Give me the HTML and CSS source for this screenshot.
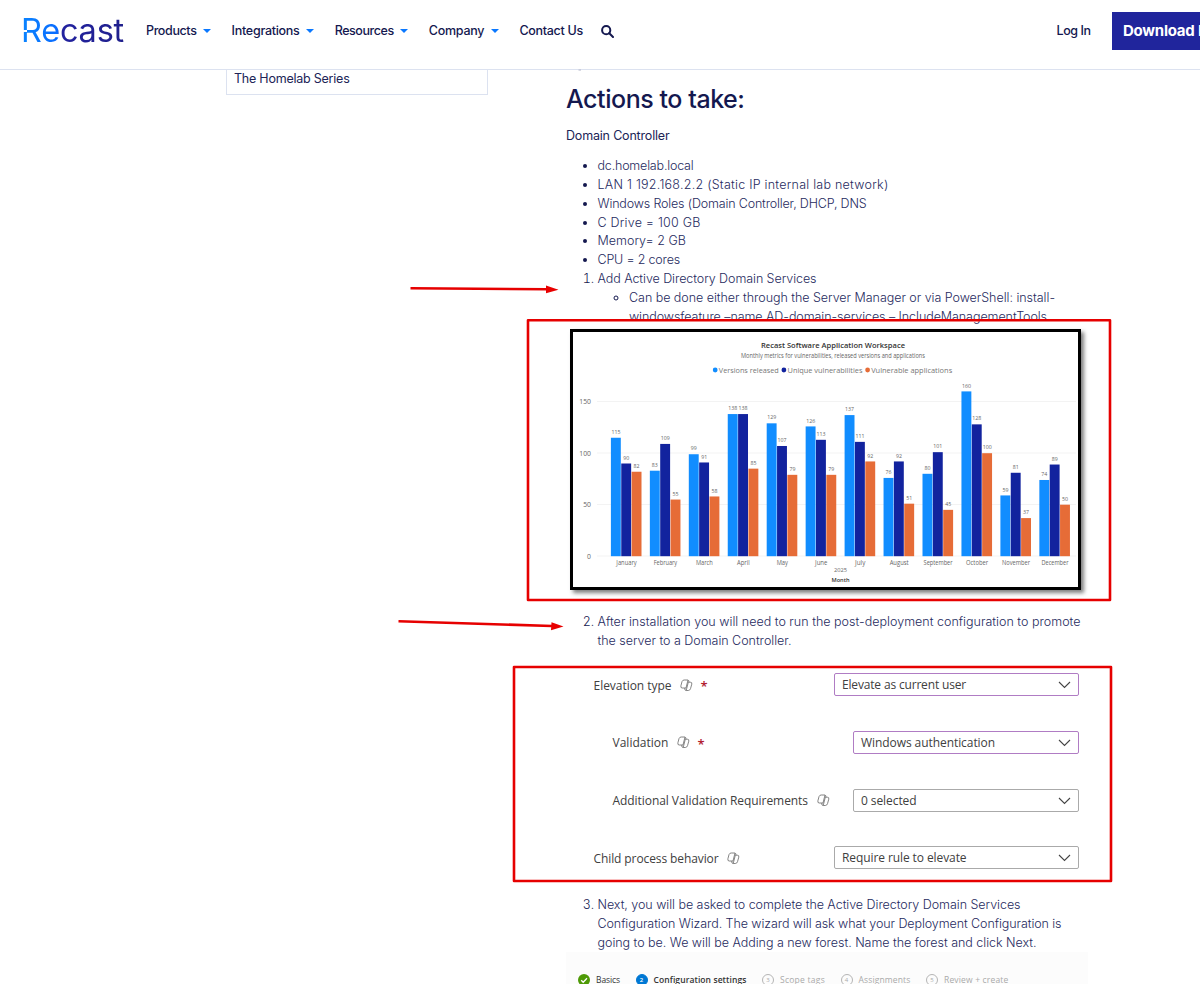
FILE: index.html
```html
<!DOCTYPE html>
<html lang="en">
<head>
<meta charset="utf-8">
<title>Recast - Homelab</title>
<link rel="stylesheet" href="styles.css">
</head>
<body>
<header class="header">
  <a class="logo"><span class="logo-text" data-w="103">Recast</span><i class="cut cut-r"></i></a>
  <nav class="nav">
    <a class="nav-item"><span data-w="50.5">Products</span><i class="caret"></i></a>
    <a class="nav-item"><span data-w="68">Integrations</span><i class="caret"></i></a>
    <a class="nav-item"><span data-w="59">Resources</span><i class="caret"></i></a>
    <a class="nav-item"><span data-w="55.5">Company</span><i class="caret"></i></a>
    <a class="nav-item"><span data-w="63.5">Contact Us</span></a>
    <svg class="search" viewBox="0 0 13 13"><circle cx="5.2" cy="5.2" r="4.1"/><path d="M8.3 8.3 12 12"/></svg>
  </nav>
  <a class="login"><span data-w="34">Log In</span></a>
  <a class="button"><span data-w="71.5">Download</span> R</a>
</header>
<div class="page">
  <aside class="toc"><span data-w="115.5">The Homelab Series</span></aside>
  <main class="content">
    <h2><span data-w="178.5">Actions to take:</span></h2>
    <p class="lead"><span data-w="103.5">Domain Controller</span></p>
    <ul class="specs">
      <li><span data-w="96">dc.homelab.local</span></li>
      <li><span data-w="291">LAN 1 192.168.2.2 (Static IP internal lab network)</span></li>
      <li><span data-w="269">Windows Roles (Domain Controller, DHCP, DNS</span></li>
      <li><span data-w="103">C Drive = 100 GB</span></li>
      <li><span data-w="88.5">Memory= 2 GB</span></li>
      <li><span data-w="82.5">CPU = 2 cores</span></li>
    </ul>
    <ol>
      <li><span data-w="219">Add Active Directory Domain Services</span>
        <ul class="sub">
          <li><span data-w="426">Can be done either through the Server Manager or via PowerShell: install-</span><br><span data-w="418">windowsfeature –name AD-domain-services – IncludeManagementTools</span></li>
        </ul>
      </li>
    </ol>
    <figure class="chart-frame"><svg id="chart" viewBox="573 332 505 255"></svg></figure>
    <ol start="2">
      <li><span data-w="483">After installation you will need to run the post-deployment configuration to promote</span><br><span data-w="194">the server to a Domain Controller.</span></li>
    </ol>
    <section class="form">
      <div class="row"><span class="label" data-w="78">Elevation type</span><svg class="pilot"><use href="#pilot"/></svg><b>*</b><div class="select wide hot"><span data-w="124">Elevate as current user</span><svg class="chev"><use href="#chev"/></svg></div></div>
      <div class="row nested"><span class="label" data-w="56">Validation</span><svg class="pilot"><use href="#pilot"/></svg><b>*</b><div class="select hot"><span data-w="134">Windows authentication</span><svg class="chev"><use href="#chev"/></svg></div></div>
      <div class="row nested"><span class="label" data-w="195.5">Additional Validation Requirements</span><svg class="pilot"><use href="#pilot"/></svg><div class="select"><span data-w="55.5">0 selected</span><svg class="chev"><use href="#chev"/></svg></div></div>
      <div class="row"><span class="label" data-w="125">Child process behavior</span><svg class="pilot"><use href="#pilot"/></svg><div class="select wide"><span data-w="124.5">Require rule to elevate</span><svg class="chev"><use href="#chev"/></svg></div></div>
    </section>
    <ol start="3">
      <li><span data-w="423">Next, you will be asked to complete the Active Directory Domain Services</span><br><span data-w="464">Configuration Wizard. The wizard will ask what your Deployment Configuration is</span><br><span data-w="439">going to be. We will be Adding a new forest. Name the forest and click Next.</span></li>
    </ol>
    <section class="steps">
      <div class="step done"><svg class="badge" viewBox="0 0 12 12"><path d="M3.2 6.2 5.2 8.2 9 4.2"/></svg><span data-w="24">Basics</span></div>
      <div class="step current"><i class="badge">2</i><span data-w="93">Configuration settings</span></div>
      <div class="step"><i class="badge">3</i><span data-w="45">Scope tags</span></div>
      <div class="step"><i class="badge">4</i><span data-w="52">Assignments</span></div>
      <div class="step"><i class="badge">5</i><span data-w="64.5">Review + create</span></div>
    </section>
  </main>
</div>
<svg class="marks" viewBox="0 0 1200 984">
  <defs>
    <g id="pilot" fill="none" stroke="#777" stroke-width=".9" stroke-linejoin="round"><path d="M4.200 1H8L6 9H2.200Q.4 9 .9 6.800L2 2.600Q2.600 1 4.200 1ZM8.200 3.200h2.100q1.900 0 1.500 1.900L10.500 9.700Q9.900 11.500 8.300 11.500H6.200L8.300 3.200M6.200 11.500Q4.400 11.500 4.700 9M8 1q1 .3 1 2.200"/></g>
    <path id="chev" d="M1 1 6.500 6.500 12 1" fill="none" stroke="#444" stroke-width="1.100"/>
  </defs>
  <rect x="528" y="320.300" width="582" height="279.700"/>
  <rect x="514" y="667" width="597" height="214"/>
  <path d="M410.500 288.300 547 289.300M398.500 621.300 552 626"/>
  <path class="head" d="M546 285.500 558.500 289.700 546 293.300ZM551.500 622.300 563.500 626.500 551 630.200Z"/>
  <path class="speck" d="M578.500 70h2.500"/>
</svg>
<script src="app.js"></script>
</body>
</html>
```
FILE: styles.css
```css
* { box-sizing: border-box; }
body { margin: 0; width: 1200px; height: 984px; overflow: hidden; position: relative; background: #fff; color: #262a5e; font: 300 12.5px/18.8px Inter, sans-serif; }
[data-w] { white-space: nowrap; }
.header { height: 70px; border-bottom: 1px solid #dce2f0; display: flex; align-items: flex-start; padding-left: 22px; color: #14184f; font-weight: 500; font-size: 12.5px; overflow: hidden; }
.logo { flex: none; position: relative; width: 124px; height: 62px; display: block; }
.logo-text { display: inline-block; margin-left: -1px; font: 400 32.5px/62px Inter, sans-serif; background: linear-gradient(90deg, #0a84ff 0, #0a6cff 37px, #2222a0 38px, #20208c 100%); -webkit-background-clip: text; background-clip: text; color: transparent; }
.cut { position: absolute; background: #fff; }
.cut-r { left: 0; top: 30px; width: 4.500px; height: 1.500px; }
.nav { flex: none; display: flex; align-items: center; height: 62px; gap: 20.600px; }
.nav-item { display: flex; align-items: center; }
.caret { margin-left: 6.500px; border: 4px solid transparent; border-top: 4.500px solid #0a78ff; border-bottom: 0; }
.search { width: 13px; height: 13px; margin-left: -2.500px; fill: none; stroke: #14184f; stroke-width: 2; stroke-linecap: round; }
.login { margin-left: auto; line-height: 62px; }
.button { flex: none; margin: 12px 0 0 21.500px; width: 88px; overflow: hidden; height: 37.500px; padding-left: 11px; background: #20259c; color: #fff; font-weight: 700; font-size: 15px; line-height: 37px; white-space: pre; }
.page { display: flex; align-items: flex-start; padding-left: 226px; }
.toc { width: 262px; height: 24.500px; border: 1px solid #dce2f0; border-top: 0; padding: 0 7px; line-height: 17px; font-weight: 400; color: #202456; }
.content { width: 522px; margin-left: 78px; }
h2 { margin: 15px 0 0; font-size: 25px; line-height: 28px; font-weight: 500; color: #14184f; }
.lead { margin: 14px 0 11.500px; font-weight: 400; color: #202456; }
ul, ol { margin: 0; padding-left: 31.500px; }
.content li::marker { color: #14184f; }
.sub { list-style: circle; }
.chart-frame { margin: 3px 0 0 4px; width: 511px; height: 261px; border: 3px solid #000; box-shadow: 3px 3px 4px rgba(0,0,0,.5); }
.chart-frame + ol { margin-top: 22.500px; }
#chart { display: block; width: 505px; height: 255px; font-family: "Open Sans", sans-serif; font-weight: 400; }
.form { height: 245.500px; padding: 22px 9px 0 27.500px; color: #404040; font: 400 12px/24px "Open Sans", sans-serif; }
.row { display: flex; align-items: center; height: 24px; margin-bottom: 33.800px; }
.label { padding-top: 2px; }
.nested { padding-left: 19px; }
.pilot { width: 13px; height: 13px; margin: 1px 0 0 8.500px; }
.row b { color: #b01c2e; font-size: 13px; font-weight: 600; margin-left: 7.500px; height: 21px; }
.select { margin-left: auto; width: 226px; height: 23px; border: 1px solid #aaa; border-radius: 2px; display: flex; align-items: center; justify-content: space-between; padding: 1px 7.500px 0 7px; line-height: 20px; }
.wide { width: 245px; }
.hot { border-color: #b07cc4; }
.chev { width: 13px; height: 8px; }
.steps { display: flex; align-items: center; height: 60px; margin-top: 0; padding: 0 0 4px 12px; background: #fcfcfc; font: 400 8.500px/12px "Open Sans", sans-serif; color: #aaa; }
.step { display: flex; align-items: center; margin-right: 15.500px; }
.badge { width: 12px; height: 12px; border: 1px solid #b5b5b5; border-radius: 50%; margin-right: 6px; font-size: 6px; line-height: 10px; text-align: center; font-style: normal; }
.done, .current { color: #333; }
.done .badge { background: #4e9a06; border: 0; fill: none; stroke: #fff; stroke-width: 1.300; }
.current { font-weight: 600; }
.current .badge { background: #0078d4; border-color: #0078d4; color: #fff; }
.marks { position: absolute; left: 0; top: 0; width: 1200px; height: 984px; fill: none; stroke: #e60000; stroke-width: 2.600; stroke-linejoin: round; pointer-events: none; }
.marks .head { fill: #e80000; stroke: none; }
.marks .speck { stroke: #b4b6ca; stroke-width: 1; }
```
FILE: app.js
```js
document.querySelectorAll('[data-w]').forEach(el => {
  const width = el.getBoundingClientRect().width;
  const spacing = (parseFloat(el.dataset.w) - width) / el.textContent.length;
  el.style.letterSpacing = spacing + 'px';
});

const months = [
  ['January', 20.3, 115, 90, 82], ['February', 23.5, 83, 109, 55], ['March', 17, 99, 91, 58],
  ['April', 12.7, 138, 138, 85], ['May', 11.3, 129, 107, 79], ['June', 12.3, 126, 113, 79],
  ['July', 10.3, 137, 111, 92], ['August', 19, 76, 92, 51], ['September', 29, 80, 101, 45],
  ['October', 22, 160, 128, 100], ['November', 28, 59, 81, 37], ['December', 27, 74, 89, 50]
];
const colors = ['#118dff', '#12239e', '#e66c37'];
const text = (x, y, s, size, w, anchor = 'middle', fill = '#666', weight = 400) =>
  `<text x="${x}" y="${y}" font-size="${size}" text-anchor="${anchor}" fill="${fill}" font-weight="${weight}"${w ? ` textLength="${w}" lengthAdjust="spacingAndGlyphs"` : ''}>${s}</text>`;
let out = '';
for (const v of [0, 50, 100, 150]) {
  const y = 556 - v * 1.03;
  out += `<path d="M597 ${y}H1076" stroke="#eee" stroke-width=".7"/>` + text(591, y + 2.5, v, 6.8, 0, 'end');
}
months.forEach(([name, nameWidth, ...values], i) => {
  const x = 610.9 + i * 38.95;
  values.forEach((v, j) => {
    const h = v * 1.03, bx = x + j * 10.35;
    out += `<rect x="${bx}" y="${556.2 - h}" width="9.9" height="${h}" fill="${colors[j]}"/>`;
    out += text(bx + 5, 552.3 - h, v, 5.7, v > 99 ? 9 : 6);
  });
  out += text(x + 15.6, 564.5, name, 6.2, nameWidth);
});
out += text(833, 347.5, 'Recast Software Application Workspace', 7.6, 144, 'middle', '#333', 600);
out += text(833, 358.3, 'Monthly metrics for vulnerabilities, released versions and applications', 6.3, 184);
[[715.2, 'Versions released', 60], [783.9, 'Unique vulnerabilities', 75], [867.6, 'Vulnerable applications', 81]].forEach(([x, s, w], i) => {
  out += `<circle cx="${x}" cy="370" r="2.4" fill="${colors[i]}"/>` + text(x + 3.6, 372.7, s, 8, w, 'start', '#777');
});
out += text(840.5, 572, '2025', 6, 13) + text(840.5, 582, 'Month', 6, 18, 'middle', '#333', 600);
document.getElementById('chart').innerHTML = out;
```
